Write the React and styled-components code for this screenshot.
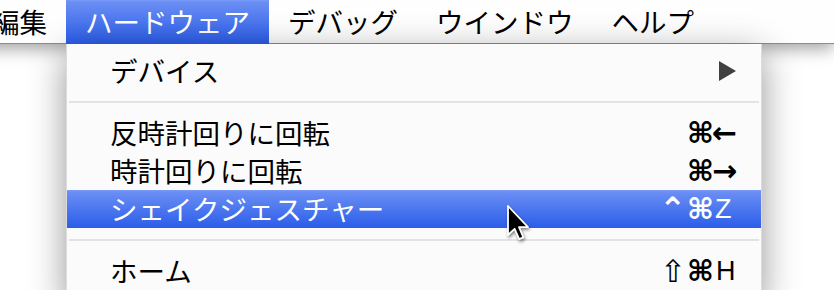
import React from "react";
import styled, { createGlobalStyle } from "styled-components";

const Global = createGlobalStyle`
  html, body {
    margin: 0;
    height: 290px;
    overflow: hidden;
    background: #ffffff;
  }
  body {
    font-family: "Noto Sans CJK JP", "Noto Sans", sans-serif;
    font-weight: 400;
    color: #000;
  }
`;

const blue = "linear-gradient(to bottom, #7a9bf6 0px, #6a8ef4 2px, #2b5de9 100%)";

const Bar = styled.nav`
  position: relative;
  z-index: 2;
  display: flex;
  height: 44px;
  margin-left: -27px;
  background: #fefefe;
  box-shadow: inset 0 -1px 0 #8c8c8c, 0 4px 18px rgba(0, 0, 0, 0.4);
`;

const BarItem = styled.div`
  position: relative;
  padding: 0 19px;
  font-size: 27.5px;
  line-height: 43px;
  height: 44px;
  box-sizing: border-box;
  white-space: nowrap;
  color: ${(p) => (p.$open ? "#fff" : "#000")};
  background: ${(p) => (p.$open ? blue : "transparent")};
`;

const Dropdown = styled.div`
  position: absolute;
  top: 44px;
  left: 0;
  width: 696px;
  box-sizing: border-box;
  padding: 8px 0 8px;
  background: #fbfbfb;
  border: 1px solid rgba(0, 0, 0, 0.12);
  border-top: none;
  box-shadow: 0 10px 34px rgba(0, 0, 0, 0.42);
  color: #000;
`;

const Row = styled.div`
  display: flex;
  align-items: center;
  height: 38px;
  padding: 0 19px 0 43px;
  font-size: 27.5px;
  line-height: 38px;
  color: ${(p) => (p.$active ? "#fff" : "#000")};
  background: ${(p) => (p.$active ? blue : "transparent")};
`;

const Label = styled.span`
  flex: 1;
  margin-top: -2px;
  white-space: nowrap;
`;

const Separator = styled.div`
  height: 24px;
  display: flex;
  align-items: center;
  padding: 0 2px;
  &::after {
    content: "";
    flex: 1;
    height: 2px;
    background: #e3e3e3;
  }
`;

const SubArrow = styled.span`
  width: 0;
  height: 0;
  margin-right: 6px;
  border-top: 10px solid transparent;
  border-bottom: 10px solid transparent;
  border-left: 17px solid #404040;
`;

const Keys = styled.span`
  display: grid;
  grid-template-columns: 27px 23px 30px;
  align-items: center;
  height: 38px;
  font-family: "Liberation Sans", "DejaVu Sans", sans-serif;
  font-weight: 400;
  font-size: 27px;
  line-height: 38px;
`;

const Mod = styled.span`
  justify-self: end;
  padding-right: 3px;
  font-family: "DejaVu Sans", sans-serif;
  font-size: ${(p) => p.$size || 24}px;
  font-weight: ${(p) => p.$weight || 400};
`;

const Cmd = styled.span`
  justify-self: start;
  font-family: "DejaVu Sans", sans-serif;
  font-size: 29px;
  font-weight: 700;
  margin-left: -2px;
`;

const Key = styled.span`
  justify-self: start;
  padding-left: ${(p) => p.$pad || 0}px;
  font-family: ${(p) => (p.$arrow ? '"DejaVu Sans", sans-serif' : "inherit")};
  font-size: ${(p) => (p.$arrow ? 30 : 27)}px;
  font-weight: ${(p) => (p.$arrow ? 700 : 400)};
`;

const Cursor = styled.svg`
  position: absolute;
  left: 439px;
  top: 160px;
  filter: drop-shadow(1px 2px 1.5px rgba(0, 0, 0, 0.45));
`;

const Shortcut = ({ mod, modSize, modWeight, keyChar, keyPad, arrow }) => (
  <Keys>
    <Mod $size={modSize} $weight={modWeight}>
      {mod}
    </Mod>
    <Cmd>⌘</Cmd>
    <Key $pad={keyPad} $arrow={arrow}>
      {keyChar}
    </Key>
  </Keys>
);

const App = () => {
  return (
    <>
      <Global />
      <Bar>
        <BarItem>編集</BarItem>
        <BarItem $open>
          ハードウェア
          <Dropdown>
            <Row>
              <Label>デバイス</Label>
              <SubArrow />
            </Row>
            <Separator />
            <Row>
              <Label>反時計回りに回転</Label>
              <Shortcut keyChar="←" arrow />
            </Row>
            <Row>
              <Label>時計回りに回転</Label>
              <Shortcut keyChar="→" arrow />
            </Row>
            <Row $active>
              <Label>シェイクジェスチャー</Label>
              <Shortcut mod="⌃" modSize={32} modWeight={700} keyChar="Z" keyPad={3} />
            </Row>
            <Separator />
            <Row>
              <Label>ホーム</Label>
              <Shortcut mod="⇧" modSize={31} keyChar="H" keyPad={4} />
            </Row>
            <Cursor width="24" height="38" viewBox="0 0 12 19">
              <path
                d="M1 1 L1 15.5 L4.3 12.4 L6.6 17.6 L8.7 16.7 L6.5 11.6 L11 11.6 Z"
                fill="#000"
                stroke="#fff"
                strokeWidth="0.9"
                strokeLinejoin="round"
              />
            </Cursor>
          </Dropdown>
        </BarItem>
        <BarItem>デバッグ</BarItem>
        <BarItem>ウインドウ</BarItem>
        <BarItem>ヘルプ</BarItem>
      </Bar>
    </>
  );
};

export default App;
